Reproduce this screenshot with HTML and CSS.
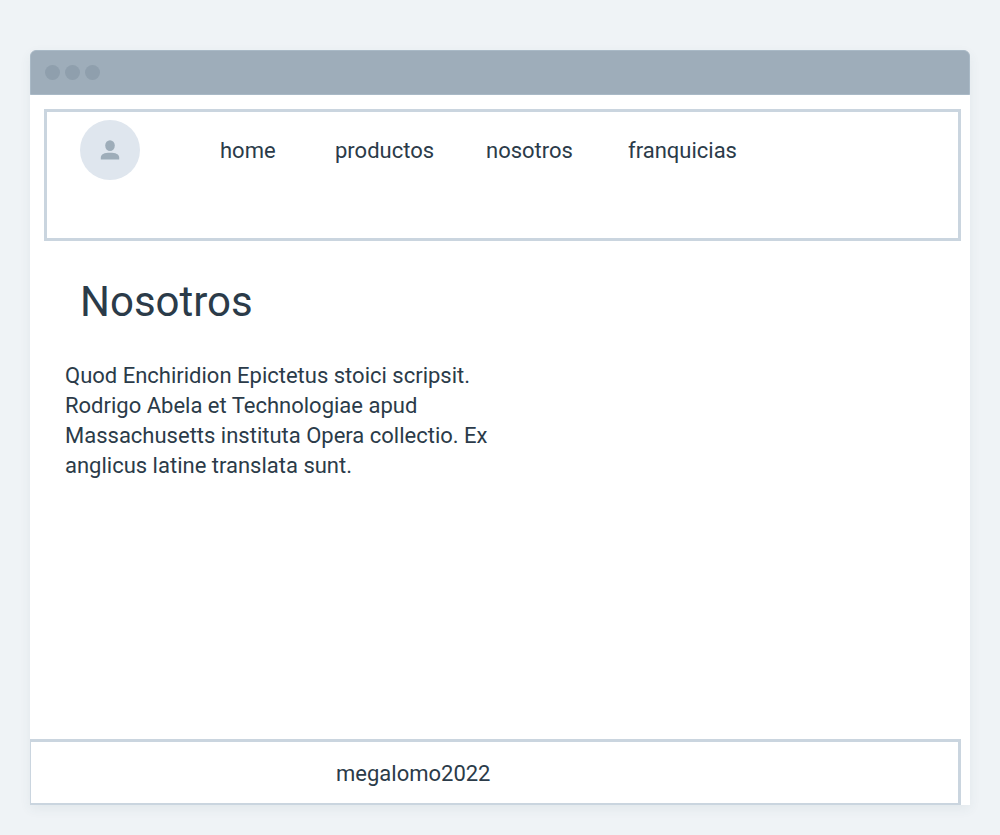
FILE: index.html
```html
<!DOCTYPE html>
<html lang="es">
<head>
<meta charset="utf-8">
<title>Nosotros</title>
<link rel="stylesheet" href="styles.css">
</head>
<body>
<div class="window">
  <div class="titlebar">
    <span class="dot"></span><span class="dot"></span><span class="dot"></span>
  </div>
  <header class="header">
    <div class="avatar">
      <svg width="20" height="20" viewBox="0 0 20 20" aria-hidden="true">
        <ellipse cx="10" cy="5.6" rx="4.8" ry="5.4"/>
        <path d="M.8 19.6V17.8C.8 14 4.2 12.7 10 12.7s9.2 1.3 9.2 5.1v1.8z"/>
      </svg>
    </div>
    <nav class="nav">
      <a href="#home">home</a>
      <a href="#productos">productos</a>
      <a href="#nosotros">nosotros</a>
      <a href="#franquicias">franquicias</a>
    </nav>
  </header>
  <main class="main">
    <h1 class="title">Nosotros</h1>
    <p class="copy">Quod Enchiridion Epictetus stoici scripsit.<br>Rodrigo Abela et Technologiae apud<br>Massachusetts instituta Opera collectio. Ex<br>anglicus latine translata sunt.</p>
  </main>
  <footer class="footer">megalomo2022</footer>
</div>
</body>
</html>
```
FILE: styles.css
```css
* {
  box-sizing: border-box;
}

body {
  margin: 0;
  min-height: 100vh;
  display: flex;
  padding: 50px 30px 30px;
  background: #eff3f6;
  color: #2b3b49;
  font-family: Roboto, "Liberation Sans", sans-serif;
  font-size: 22px;
  line-height: 30px;
}

.window {
  flex: 1;
  min-width: 0;
  display: flex;
  flex-direction: column;
  background: #fff;
  border-radius: 6px 6px 0 0;
  box-shadow: 0 4px 12px rgba(60, 80, 100, 0.07);
}

.titlebar {
  display: flex;
  align-items: center;
  gap: 5px;
  height: 45px;
  padding: 0 14px;
  background: #9eadba;
  border: 1px solid #a9b9c6;
  border-radius: 6px 6px 0 0;
}

.dot {
  width: 15px;
  height: 15px;
  border-radius: 50%;
  background: #8f9fad;
}

.header {
  display: flex;
  align-items: center;
  gap: 80px;
  margin: 14px 9px 0 14px;
  padding: 8px 33px 58px;
  border: 3px solid #cad5df;
}

.avatar {
  display: flex;
  align-items: center;
  justify-content: center;
  flex: none;
  width: 60px;
  height: 60px;
  border-radius: 50%;
  background: #dfe6ee;
  fill: #9eadb9;
}

.nav {
  display: grid;
  grid-template-columns: 115px 151px 142px auto;
  padding-top: 2px;
}

.nav a {
  color: inherit;
  text-decoration: none;
}

.main {
  flex: 1;
  padding: 31px 35px;
}

.title {
  margin: 0 0 29px 15px;
  font-size: 42px;
  line-height: 60px;
  font-weight: 400;
}

.copy {
  margin: 0;
}

.footer {
  margin-right: 9px;
  padding: 17px 20px 14px 305px;
  border: solid #cad5df;
  border-width: 3px 3px 2px 1px;
}
```
